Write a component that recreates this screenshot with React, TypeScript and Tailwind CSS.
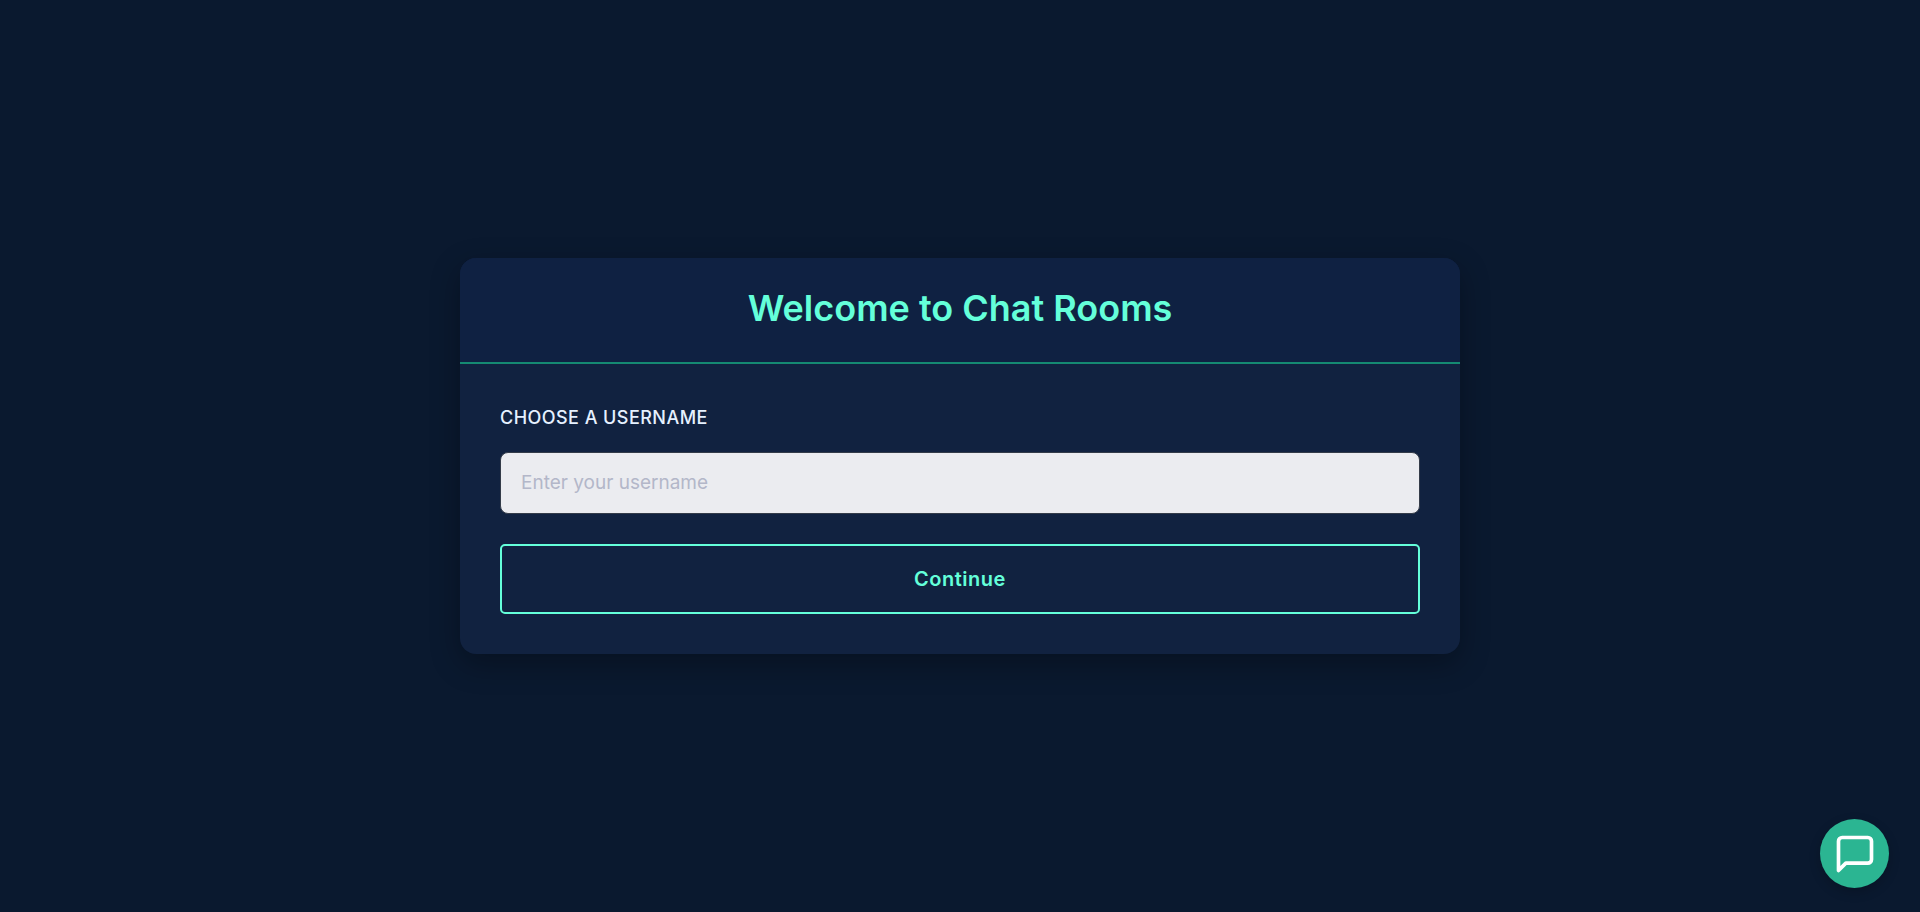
import { useState } from "react";

function ChatIcon() {
  return (
    <svg
      viewBox="0 0 24 24"
      fill="none"
      stroke="currentColor"
      strokeWidth="2"
      strokeLinecap="round"
      strokeLinejoin="round"
      className="size-11"
      aria-hidden="true"
    >
      <path d="M21 15a2 2 0 0 1-2 2H7l-4 4V5a2 2 0 0 1 2-2h14a2 2 0 0 1 2 2z" />
    </svg>
  );
}

export default function App() {
  const [username, setUsername] = useState("");

  return (
    <div className="flex min-h-screen items-center justify-center bg-[#0a192f] font-['Inter',sans-serif]">
      <main className="w-full max-w-[1000px] overflow-hidden rounded-2xl bg-[#112240] shadow-[0_10px_30px_rgba(0,0,0,0.3)]">
        <header className="border-b-2 border-[#158a72] bg-[#0f2142] px-10 pt-7 pb-8 text-center">
          <h1 className="text-4xl leading-11 font-semibold text-[#64ffda]">Welcome to Chat Rooms</h1>
        </header>
        <form className="flex flex-col p-10" onSubmit={(event) => event.preventDefault()}>
          <label htmlFor="username" className="mb-5 text-lg leading-7 font-medium tracking-wide text-[#e6f1ff] uppercase">
            Choose a username
          </label>
          <input
            id="username"
            type="text"
            placeholder="Enter your username"
            value={username}
            onChange={(event) => setUsername(event.target.value)}
            className="mb-[30px] h-[62px] rounded-lg border border-[#343c49] bg-[#ebecf0] px-5 pb-0.5 text-[19px] text-[#0a192f] outline-none placeholder:text-[#b3b7c9]"
          />
          <button
            type="submit"
            className="h-[70px] cursor-pointer rounded-[5px] border-2 border-[#64ffda] text-xl font-semibold tracking-wide text-[#64ffda]"
          >
            Continue
          </button>
        </form>
      </main>
      <button
        type="button"
        aria-label="Open chat"
        className="fixed right-[31px] bottom-6 flex size-[69px] cursor-pointer items-center justify-center rounded-full bg-[#2bb592] text-white shadow-[0_4px_12px_rgba(0,0,0,0.2)]"
      >
        <ChatIcon />
      </button>
    </div>
  );
}
